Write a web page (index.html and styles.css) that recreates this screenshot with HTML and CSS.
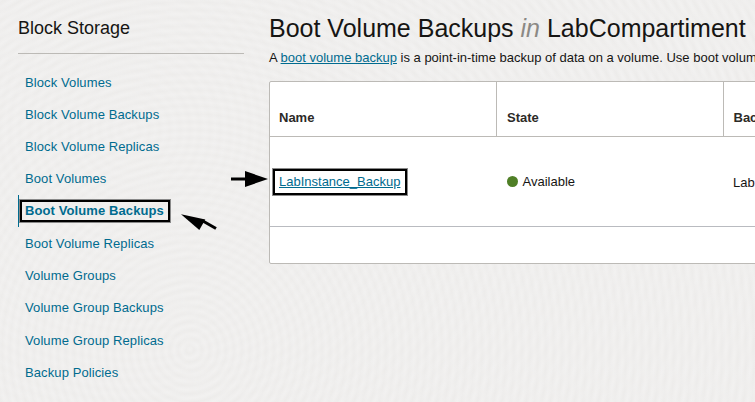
FILE: index.html
```html
<!DOCTYPE html>
<html lang="en">
<head>
<meta charset="utf-8">
<title>Boot Volume Backups</title>
<link rel="stylesheet" href="styles.css">
</head>
<body>
<div class="page">
  <aside class="sidebar">
    <h2 class="side-title">Block Storage</h2>
    <nav class="side-nav">
      <a class="nav-link" href="#">Block Volumes</a>
      <a class="nav-link" href="#">Block Volume Backups</a>
      <a class="nav-link" href="#">Block Volume Replicas</a>
      <a class="nav-link" href="#">Boot Volumes</a>
      <a class="nav-link active" href="#"><span class="callout">Boot Volume Backups</span></a>
      <a class="nav-link" href="#">Boot Volume Replicas</a>
      <a class="nav-link" href="#">Volume Groups</a>
      <a class="nav-link" href="#">Volume Group Backups</a>
      <a class="nav-link" href="#">Volume Group Replicas</a>
      <a class="nav-link" href="#">Backup Policies</a>
    </nav>
  </aside>
  <main class="content">
    <h1 class="page-title">Boot Volume Backups <em>in</em> LabCompartiment</h1>
    <p class="intro">A <a href="#">boot volume backup</a> is a point-in-time backup of data on a volume. Use boot volume backups to restore a boot volume to a previous state.</p>
    <div class="table-card">
      <table class="data-table">
        <thead>
          <tr><th>Name</th><th>State</th><th>Backup</th></tr>
        </thead>
        <tbody>
          <tr>
            <td><a class="callout-cell" href="#">LabInstance_Backup</a></td>
            <td><span class="status"><span class="dot"></span>Available</span></td>
            <td>LabInstance</td>
          </tr>
        </tbody>
      </table>
      <div class="table-foot"></div>
    </div>
  </main>
</div>
<svg class="arrow arrow-row" width="44" height="16" viewBox="0 0 44 16"><path d="M0 8H16" stroke="#000" stroke-width="3"/><path d="M14 0L37 8L14 16Z" fill="#000"/></svg>
<svg class="arrow arrow-nav" width="38" height="22" viewBox="0 0 38 22"><path d="M21 9.5L35 17.5" stroke="#000" stroke-width="3"/><path d="M0 3.3L24.3 8.5L18.3 19Z" fill="#000"/></svg>
</body>
</html>
```
FILE: styles.css
```css
* { box-sizing: border-box; }
html, body { margin: 0; height: 100%; }
body {
  position: relative;
  width: 755px;
  height: 402px;
  overflow: hidden;
  font-family: "Liberation Sans", Arial, sans-serif;
  color: #161513;
  background-color: #efeeed;
  background-image:
    repeating-radial-gradient(circle at 190px 350px, rgba(255,255,255,.2), rgba(255,255,255,0) 4px, rgba(255,255,255,.2) 8px),
    repeating-radial-gradient(circle at 130px 130px, rgba(226,224,221,.15), rgba(226,224,221,0) 5px, rgba(226,224,221,.15) 10px);
}
a { color: #006b8f; }
.page { display: flex; height: 100%; padding-left: 18px; }
.sidebar { flex: 0 0 226px; }
.side-title {
  margin: 18px 0 0;
  padding-bottom: 14px;
  border-bottom: 1px solid #bcbab6;
  font-size: 18px;
  line-height: 21px;
  font-weight: 400;
}
.side-nav { display: flex; flex-direction: column; padding-top: 12.08px; }
.nav-link {
  display: flex;
  align-items: center;
  height: 32.25px;
  padding-left: 7px;
  font-size: 13px;
  letter-spacing: .1px;
  text-decoration: none;
  white-space: nowrap;
}
.nav-link.active {
  border-left: 1px solid #006b8f;
  padding-left: 0;
  font-weight: 700;
}
.callout {
  border: 3px solid #000;
  outline: 1px solid #8a8a8a;
  outline-offset: -1px;
  padding: 0 4px 0 3px;
  line-height: 18px;
}
.content { flex: 1 1 auto; min-width: 0; margin-left: 25px; }
.page-title {
  margin: 13px 0 0;
  font-size: 25px;
  line-height: 30px;
  font-weight: 400;
  white-space: nowrap;
}
.page-title em { color: #8b8985; font-style: italic; }
.intro {
  margin: 7px 0 0;
  font-size: 13px;
  line-height: 16px;
  white-space: nowrap;
}
.table-card {
  width: 700px;
  margin-top: 15px;
  background: #fff;
  border: 1px solid #bcbab6;
  border-radius: 2px 0 0 2px;
}
.data-table { border-collapse: collapse; table-layout: fixed; width: 680px; }
.data-table th, .data-table td {
  padding: 0 9px;
  text-align: left;
  font-size: 13px;
}
.data-table th:first-child { width: 226.5px; }
.data-table th {
  height: 54px;
  padding-top: 18px;
  font-weight: 700;
  border-right: 1px solid #bcbab6;
  border-bottom: 1px solid #bcbab6;
  color: #2c2a27;
}
.data-table th:nth-child(n+2), .data-table td:nth-child(n+2) { padding-left: 10px; }
.data-table td { height: 90px; padding-top: 2px; border-bottom: 1px solid #b9bbc0; }
.callout-cell {
  display: inline-block;
  margin-left: -7px;
  padding: 0 5px 0 4px;
  border: 3px solid #000;
  outline: 1px solid #8a8a8a;
  outline-offset: -1px;
  line-height: 22px;
  text-decoration: underline;
}
.status { display: inline-flex; align-items: center; }
.dot {
  width: 11px;
  height: 11px;
  margin-right: 5px;
  border-radius: 50%;
  background: #4f7f26;
}
.table-foot { height: 36px; }
.arrow { position: absolute; display: block; }
.arrow-row { left: 231px; top: 171px; }
.arrow-nav { left: 181px; top: 211px; }
```
